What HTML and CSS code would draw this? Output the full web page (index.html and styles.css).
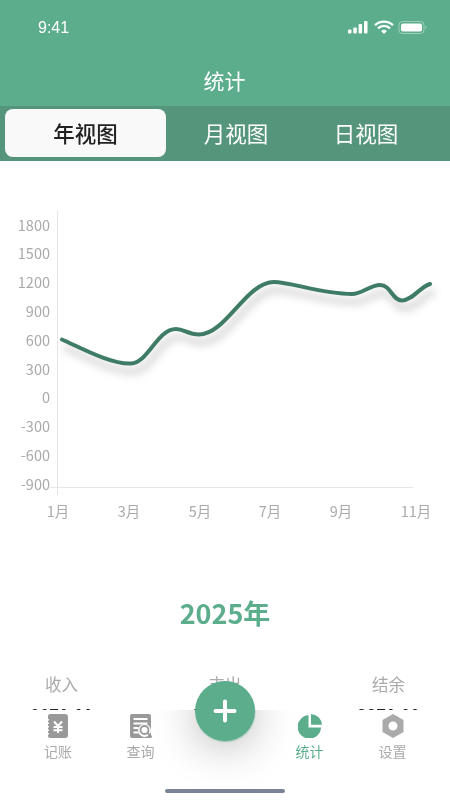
FILE: index.html
```html
<!DOCTYPE html>
<html lang="zh-CN">
<head>
    <meta charset="UTF-8">
    <title>统计</title>
    <link rel="stylesheet" href="styles.css">
</head>
<body>

<div class="screen">
    <header class="header">
        <div class="status-bar">
            <span class="clock">9:41</span>
            <svg class="status-icons" width="80" height="16" viewBox="0 0 80 16">
                <rect x="1" y="9.5" width="3.5" height="4" rx="1" fill="#fff"/>
                <rect x="6.3" y="7.5" width="3.5" height="6" rx="1" fill="#fff"/>
                <rect x="11.6" y="4" width="3.5" height="9.5" rx="1" fill="#fff"/>
                <rect x="17" y="1" width="3.5" height="12.5" rx="1" fill="#fff"/>
                <path d="M28 5.2a13 13 0 0 1 18 0" fill="none" stroke="#fff" stroke-width="2.3"/>
                <path d="M31 8.4a8.6 8.6 0 0 1 12 0" fill="none" stroke="#fff" stroke-width="2.3"/>
                <path d="M34.2 11.2a4 4 0 0 1 5.6 0L37 14z" fill="#fff"/>
                <rect x="52" y="1.5" width="25" height="12" rx="3.5" fill="none" stroke="#fff" stroke-opacity=".4"/>
                <rect x="54" y="3.5" width="21" height="8" rx="2" fill="#fff"/>
                <path d="M78.5 6v3a1.6 1.6 0 0 0 0-3z" fill="#fff" fill-opacity=".45"/>
            </svg>
        </div>
        <h1 class="page-title">统计</h1>
    </header>

    <nav class="view-tabs">
        <div class="view-tab view-tab-active">年视图</div>
        <div class="view-tab">月视图</div>
        <div class="view-tab">日视图</div>
    </nav>

    <section class="chart">
        <svg class="chart-svg" width="450" height="330" viewBox="0 200 450 330">
            <line class="axis" x1="57.5" y1="210" x2="57.5" y2="495"/>
            <line class="axis" x1="50" y1="487.5" x2="413" y2="487.5"/>

            <text class="y-label" x="50" y="230.500">1800</text>
            <text class="y-label" x="50" y="259.300">1500</text>
            <text class="y-label" x="50" y="288">1200</text>
            <text class="y-label" x="50" y="317">900</text>
            <text class="y-label" x="50" y="345.700">600</text>
            <text class="y-label" x="50" y="374.500">300</text>
            <text class="y-label" x="50" y="403.300">0</text>
            <text class="y-label" x="50" y="432">-300</text>
            <text class="y-label" x="50" y="461">-600</text>
            <text class="y-label" x="50" y="490">-900</text>

            <text class="x-label" x="58" y="517">1月</text>
            <text class="x-label" x="129" y="517">3月</text>
            <text class="x-label" x="200" y="517">5月</text>
            <text class="x-label" x="270" y="517">7月</text>
            <text class="x-label" x="341" y="517">9月</text>
            <text class="x-label" x="416" y="517">11月</text>

            <path class="trend" d="M62 339.5C85 350 112 364.500 131 363.500C148 363 157 329 176 329C184 329 188 334.500 199 334.500C226 334.500 246 282 274 282C291 282 321 294 352 294C362 294 370 285 380 285C391 285 392 300.500 402 300.500C412 300.500 420 287 430 284"/>
        </svg>
    </section>

    <h2 class="year">2025年</h2>

    <section class="totals">
        <div class="total">
            <div class="total-label">收入</div>
            <div class="total-value">8870.00</div>
        </div>
        <div class="total">
            <div class="total-label">支出</div>
            <div class="total-value">7000.00</div>
        </div>
        <div class="total">
            <div class="total-label">结余</div>
            <div class="total-value">3370.00</div>
        </div>
    </section>

    <footer class="tabbar">
        <div class="fab-glow"></div>
        <div class="tabbar-item">
            <svg class="tabbar-icon" width="24" height="24" viewBox="0 0 24 24">
                <path fill="#999" d="M4 0h15a3 3 0 0 1 3 3v18a3 3 0 0 1-3 3H4a2 2 0 0 1-2-2v-1.500H3V19H2v-2h1v-1.500H2v-2h1V12H2v-2h1V8.500H2v-2h1V5H2V2a2 2 0 0 1 2-2z"/>
                <path fill="none" stroke="#fff" stroke-width="2" d="M8 7.500l4 4.500 4-4.500M7.500 13h9M7.500 16.200h9M12 12v7"/>
            </svg>
            <span class="tabbar-text">记账</span>
        </div>
        <div class="tabbar-item">
            <svg class="tabbar-icon" width="24" height="24" viewBox="0 0 24 24">
                <path fill="#999" d="M3 0h17a2 2 0 0 1 2 2v22H3a2 2 0 0 1-2-2V2a2 2 0 0 1 2-2z"/>
                <path fill="none" stroke="#fff" stroke-width="1.800" d="M4.500 5h14M4.500 9.500h14M4.500 14h5M4.500 18.500h5"/>
                <circle cx="15.500" cy="16.500" r="6.500" fill="#fff"/>
                <circle cx="15.500" cy="16" r="4" fill="#fff" stroke="#999" stroke-width="1.800"/>
                <path fill="none" stroke="#999" stroke-width="2" stroke-linecap="round" d="M18.500 19l3.500 3.500"/>
            </svg>
            <span class="tabbar-text">查询</span>
        </div>
        <div class="tabbar-item"></div>
        <div class="tabbar-item tabbar-item-active">
            <svg class="tabbar-icon" width="24" height="24" viewBox="0 0 24 24">
                <path fill="#5bad8c" d="M10.500 1.300V13.500H23A11.700 11.700 0 1 1 10.500 1.300z"/>
                <path fill="#5bad8c" d="M13 0A11.500 11.500 0 0 1 24 10.800H13z"/>
            </svg>
            <span class="tabbar-text">统计</span>
        </div>
        <div class="tabbar-item">
            <svg class="tabbar-icon" width="24" height="24" viewBox="0 0 24 24">
                <path fill="#aaa" fill-rule="evenodd" d="M12 0l10.500 6v12l-10.500 6-10.500-6V6zM12 7.500a4.500 4.500 0 1 0 0 9 4.500 4.500 0 0 0 0-9z"/>
            </svg>
            <span class="tabbar-text">设置</span>
        </div>
        <div class="home-bar"></div>
    </footer>

    <button class="fab">
        <svg width="24" height="24" viewBox="0 0 24 24">
            <path fill="none" stroke="#fff" stroke-width="4" stroke-linecap="round" d="M12 2.500v19M2.500 12h19"/>
        </svg>
    </button>
</div>

</body>
</html>
```

FILE: styles.css
```css
body {
    margin: 0;
    background-color: #fff;
    font-family: "Noto Sans CJK SC", "Noto Sans", sans-serif;
}

.screen {
    position: relative;
    width: 450px;
    height: 800px;
    overflow: hidden;
    will-change: transform;
}

.header {
    background-color: #5bad8c;
    height: 106px;
    color: #fff;
}

.status-bar {
    display: flex;
    justify-content: space-between;
    align-items: center;
    height: 56px;
    padding: 0 23px 0 38px;
}

.clock {
    font-family: "Liberation Sans", sans-serif;
    font-size: 16px;
}

.status-icons {
    display: block;
}

.page-title {
    margin: 0;
    padding-right: 1px;
    font-size: 21px;
    font-weight: 400;
    line-height: 48px;
    text-align: center;
}

.view-tabs {
    display: flex;
    align-items: flex-start;
    height: 55px;
    padding: 3px 0 0 5px;
    box-sizing: border-box;
    background-color: #55957c;
    color: #fff;
    font-size: 21.5px;
}

.view-tab {
    width: 130px;
    height: 48px;
    line-height: 47px;
    text-align: center;
}

.view-tab-active {
    width: 161px;
    margin-right: 5px;
    border-radius: 8px;
    background-color: #f9f9f9;
    color: #222;
    font-weight: 500;
}

.chart {
    padding-top: 39px;
}

.chart-svg {
    display: block;
}

.axis {
    stroke: #e6e6e6;
    stroke-width: 1;
}

.y-label,
.x-label {
    fill: #aaa;
    font-size: 14.5px;
}

.y-label {
    text-anchor: end;
}

.x-label {
    text-anchor: middle;
}

.trend {
    fill: none;
    stroke: #3f7c65;
    stroke-width: 4;
    stroke-linecap: round;
    filter: drop-shadow(3px 8px 4px rgba(0, 0, 0, 0.25));
}

.year {
    margin: 63px 0 0;
    color: #5bad8c;
    font-size: 27px;
    font-weight: 700;
    line-height: 40px;
    text-align: center;
}

.totals {
    display: flex;
    justify-content: space-between;
    margin-top: 39px;
    padding: 0 20px;
}

.total {
    width: 83px;
    text-align: center;
}

.total-label {
    color: #aaa;
    font-size: 16.5px;
    line-height: 24px;
}

.total-value {
    margin-top: 7px;
    color: #222;
    font-size: 17.5px;
    line-height: 24px;
}

.tabbar {
    position: absolute;
    left: 0;
    right: 0;
    bottom: 0;
    height: 90px;
    display: grid;
    grid-template-columns: 84px 81px 88px 81px 85px;
    padding: 4px 0 0 16px;
    box-sizing: border-box;
    overflow: hidden;
    background-color: #fff;
}

.tabbar-item {
    position: relative;
    display: flex;
    flex-direction: column;
    align-items: center;
    height: 52px;
    color: #aaa;
}

.tabbar-item-active {
    color: #5bad8c;
}

.tabbar-icon {
    display: block;
    flex: none;
}

.tabbar-text {
    margin-top: 2px;
    font-size: 14px;
    line-height: 22px;
}

.fab-glow {
    position: absolute;
    left: 195px;
    top: -29px;
    width: 60px;
    height: 60px;
    border-radius: 50%;
    box-shadow: 0 6px 44px rgba(0, 0, 0, 0.28);
}

.home-bar {
    position: absolute;
    left: 165px;
    bottom: 7px;
    width: 120px;
    height: 4px;
    border-radius: 2px;
    background-color: #7b8496;
}

.fab {
    position: absolute;
    left: 195px;
    top: 681px;
    display: flex;
    align-items: center;
    justify-content: center;
    width: 60px;
    height: 60px;
    padding: 0;
    border: none;
    border-radius: 50%;
    background-color: #5bad8c;
    box-shadow: 0.5px 1px 1px rgba(91, 173, 140, 0.5);
}
```
